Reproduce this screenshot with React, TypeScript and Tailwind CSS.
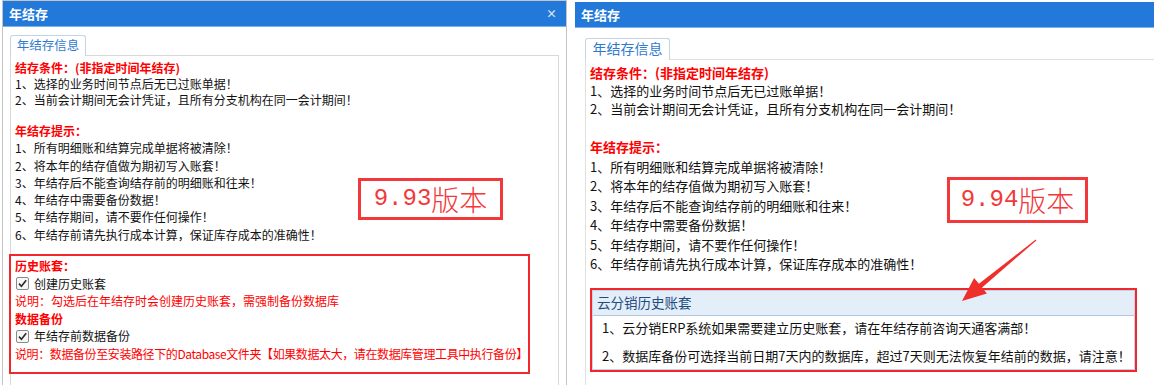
import React from "react";

const conditions = [
  "1、选择的业务时间节点后无已过账单据！",
  "2、当前会计期间无会计凭证，且所有分支机构在同一会计期间！",
];

const tips = [
  "1、所有明细账和结算完成单据将被清除！",
  "2、将本年的结存值做为期初写入账套！",
  "3、年结存后不能查询结存前的明细账和往来！",
  "4、年结存中需要备份数据！",
  "5、年结存期间，请不要作任何操作！",
  "6、年结存前请先执行成本计算，保证库存成本的准确性！",
];

function Check() {
  return (
    <svg width="13" height="13" viewBox="0 0 13 13" className="shrink-0">
      <rect x="0.5" y="0.5" width="12" height="12" rx="1.5" fill="#f6f6f6" stroke="#8a8a8a" />
      <path d="M3 6.6 L5.4 9.2 L10.2 3.2" fill="none" stroke="#2b2b2b" strokeWidth="1.6" />
    </svg>
  );
}

function TitleBar({ close }: { close?: boolean }) {
  return (
    <div className="h-[26px] bg-[#2379d9] flex items-center justify-between px-[6px] border-b border-[#7fb2ea]">
      <span className="text-white font-bold text-[13px]">年结存</span>
      {close && <span className="text-[#dbe6f3] text-[11px] font-bold mr-[3px]">×</span>}
    </div>
  );
}

function Tab({ w, h, size }: { w: string; h: string; size: string }) {
  return (
    <div
      className={`${w} ${h} ${size} relative z-10 -mb-px bg-white border border-b-0 border-[#c4d4e6] rounded-t-[3px] flex items-end justify-center pb-[1px] text-[#2f7bd0]`}
    >
      年结存信息
    </div>
  );
}

function Version({ label, className }: { label: string; className: string }) {
  return (
    <div className={`absolute border-[3px] border-[#f2383a] bg-white flex items-center justify-center text-[#f2383a] ${className}`}>
      <span className="font-[family-name:Liberation_Mono,monospace] text-[24px] leading-none">{label}</span>
      <span className="text-[28px] font-light leading-none">版本</span>
    </div>
  );
}

export default function App() {
  return (
    <div className="relative w-[1154px] h-[385px] bg-white overflow-hidden flex font-[family-name:Noto_Sans_CJK_SC,sans-serif] text-[#111]">
      {/* 9.93 */}
      <div className="ml-[2px] w-[565px] h-[400px] border border-[#c4c4c4] flex flex-col">
        <TitleBar close />
        <div className="flex-1 flex flex-col pt-[8px] pl-[7px] pr-[7px]">
          <Tab w="w-[76px]" h="h-[21px]" size="text-[12.5px]" />
          <div className="flex-1 border border-[#d8d8d8] pt-[4px] pl-[4px] text-[12px]">
            <div className="leading-[16px]">
              <div className="text-[#f00] font-bold">结存条件：(非指定时间年结存)</div>
              {conditions.map((t) => (
                <div key={t}>{t}</div>
              ))}
            </div>
            <div className="mt-[14px] leading-[17.3px]">
              <div className="text-[#f00] font-bold">年结存提示：</div>
              {tips.map((t) => (
                <div key={t}>{t}</div>
              ))}
            </div>
            <div className="mt-[11px] -ml-[6px] w-[521px] border-2 border-[#f0282c] pt-[1px] pb-[9px] pl-[4px] leading-[17.6px] text-[#f00]">
              <div className="font-bold">历史账套：</div>
              <div className="flex items-center gap-[5px] pl-[1px] text-[#111]">
                <Check />
                创建历史账套
              </div>
              <div>说明：勾选后在年结存时会创建历史账套，需强制备份数据库</div>
              <div className="font-bold">数据备份</div>
              <div className="flex items-center gap-[5px] pl-[1px] text-[#111]">
                <Check />
                年结存前数据备份
              </div>
              <div className="whitespace-nowrap tracking-[-0.4px]">说明：数据备份至安装路径下的Database文件夹【如果数据太大，请在数据库管理工具中执行备份】</div>
            </div>
          </div>
        </div>
      </div>

      <div className="w-[8px] shrink-0" />

      {/* 9.94 */}
      <div className="flex-1 pt-[2px] flex flex-col">
        <TitleBar />
        <div className="flex-1 flex flex-col pt-[10px] pl-[10px]">
          <Tab w="w-[85px]" h="h-[22px]" size="text-[14px]" />
          <div className="flex-1 border-t border-l border-[#e0e0e0] pt-[4px] pl-[4px] text-[13px]">
            <div className="leading-[18px]">
              <div className="text-[#f00] font-bold">结存条件：(非指定时间年结存)</div>
              {conditions.map((t) => (
                <div key={t}>{t}</div>
              ))}
            </div>
            <div className="mt-[19px] leading-[19.5px]">
              <div className="text-[#f00] font-bold">年结存提示：</div>
              {tips.map((t) => (
                <div key={t}>{t}</div>
              ))}
            </div>
            <div className="mt-[14px] w-[547px] h-[84px] border-2 border-[#f0282c]">
              <div className="h-full border border-[#c3d5e8] flex flex-col">
                <div className="h-[25px] bg-[#e4eef9] border-b border-[#b3c7dc] flex items-center pl-[4px] text-[13.5px] text-[#1c4d80]">
                  云分销历史账套
                </div>
                <div className="pl-[9px] flex flex-col gap-[4px] leading-[24px]">
                  <div>1、云分销ERP系统如果需要建立历史账套，请在年结存前咨询天通客满部！</div>
                  <div>2、数据库备份可选择当前日期7天内的数据库，超过7天则无法恢复年结前的数据，请注意！</div>
                </div>
              </div>
            </div>
          </div>
        </div>
      </div>

      <Version label="9.93" className="left-[358px] top-[178px] w-[145px] h-[42px]" />
      <Version label="9.94" className="left-[947px] top-[177px] w-[141px] h-[46px]" />

      <svg className="absolute left-0 top-0 pointer-events-none" width="1154" height="385">
        <polygon
          points="1036.3,240.4 1035.7,239.6 978.9,283.8 974.1,278 962,301 986.9,293.4 982.1,287.6"
          fill="#ee2f2c"
        />
      </svg>
    </div>
  );
}
